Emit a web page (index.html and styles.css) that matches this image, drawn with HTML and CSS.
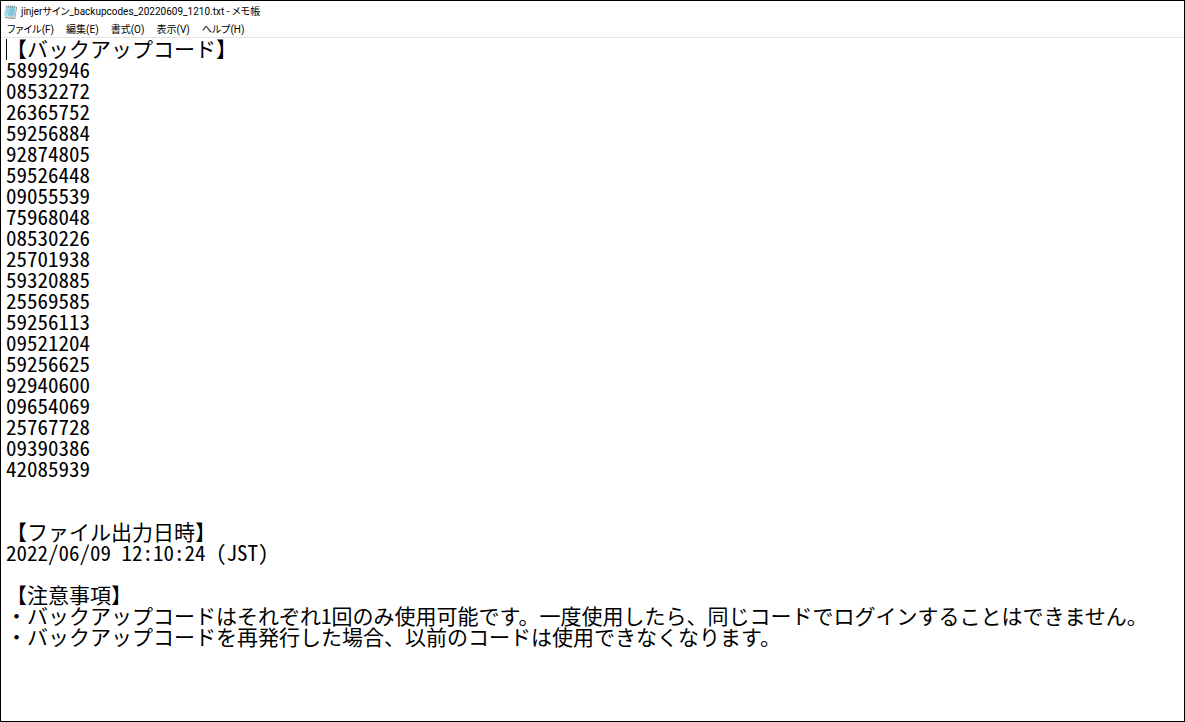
FILE: index.html
```html
<!DOCTYPE html>
<html lang="ja">
<head>
  <meta charset="UTF-8">
  <meta name="viewport" content="width=device-width, initial-scale=1.0">
  <title>jinjerサイン_backupcodes_20220609_1210.txt - メモ帳</title>
  <link rel="stylesheet" href="styles.css">
</head>
<body>

  <div class="window">
    <!-- Title bar -->
    <header class="title-bar">
      <svg class="app-icon" viewBox="0 0 16 16" aria-hidden="true">
        <path d="M3.5 2.2 15 2.6 13 15.4 2 14.4z" fill="#8b8676"/>
        <path d="M3.4 2.4 14.2 2.4 12.6 14.2 1.2 13.2z" fill="#f4f3ea"/>
        <path d="M3 2.4 13.8 2.4 11.8 13.4 1 12.2z" fill="#8fd0e2"/>
        <path d="M3 2.4 7.5 2.4 5.5 12.7 1 12.2z" fill="#b5e3ee"/>
        <path d="M3.4 5.5 12.5 5.8M3 7.7 12 8M2.6 9.9 11.6 10.3" stroke="#5eadc4" stroke-width=".6"/>
        <path d="M4 1v2.6M6 1v2.6M8 1v2.6M10 1v2.6M12 1v2.6" stroke="#67777c" stroke-width=".8"/>
      </svg>
      <span class="title" id="docTitle">jinjerサイン_backupcodes_20220609_1210.txt - メモ帳</span>
    </header>

    <!-- Menu -->
    <nav class="menu-bar">
      <button type="button">ファイル(F)</button>
      <button type="button">編集(E)</button>
      <button type="button">書式(O)</button>
      <button type="button">表示(V)</button>
      <button type="button">ヘルプ(H)</button>
    </nav>

    <!-- Text area -->
    <main class="editor">
      <textarea class="editor-text" aria-labelledby="docTitle" spellcheck="false">【バックアップコード】
58992946
08532272
26365752
59256884
92874805
59526448
09055539
75968048
08530226
25701938
59320885
25569585
59256113
09521204
59256625
92940600
09654069
25767728
09390386
42085939


【ファイル出力日時】
2022/06/09 12:10:24 (JST)

【注意事項】
・バックアップコードはそれぞれ1回のみ使用可能です。一度使用したら、同じコードでログインすることはできません。
・バックアップコードを再発行した場合、以前のコードは使用できなくなります。
</textarea>
    </main>
  </div>

</body>
</html>
```
FILE: styles.css
```css
body {
  margin: 0;
  background-color: #ffffff;
  color: #000000;
  font-family: Roboto, "Noto Sans CJK JP", sans-serif;
}

.window {
  display: flex;
  flex-direction: column;
  min-height: 100vh;
  box-sizing: border-box;
  border: 1px solid #000000;
}

/* Title bar */
.title-bar {
  display: flex;
  align-items: center;
  gap: 3px;
  height: 20px;
  padding: 1px 0 0 2px;
}

.app-icon {
  width: 15px;
  height: 16px;
}

.title {
  font-size: 10px;
  line-height: 20px;
  font-feature-settings: "palt";
  white-space: nowrap;
}

/* Menu */
.menu-bar {
  display: flex;
  height: 15px;
  border-bottom: 1px solid #e5e5e5;
}

.menu-bar button {
  padding: 0 6px;
  border: 0;
  background: none;
  color: #000000;
  font-family: inherit;
  font-size: 10px;
  line-height: 15px;
  font-feature-settings: "palt";
  white-space: nowrap;
}

.menu-bar button:hover {
  background-color: #e5f3ff;
}

/* Text area */
.editor {
  position: relative;
  display: flex;
  flex: 1;
}

.editor::before {
  content: "";
  position: absolute;
  top: 1px;
  left: 5px;
  width: 1px;
  height: 21px;
  background-color: #000000;
}

.editor-text {
  flex: 1;
  padding: 0 5px;
  border: 0;
  outline: 0;
  resize: none;
  background: none;
  color: #000000;
  font-family: "Noto Sans CJK JP", sans-serif;
  font-size: 21px;
  line-height: 21px;
  font-feature-settings: "hwid"; /* half-width latin and digits */
}
```
